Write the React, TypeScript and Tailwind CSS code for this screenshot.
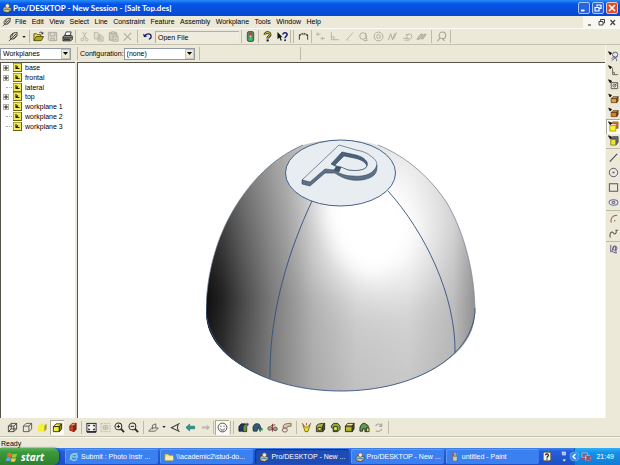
import React from 'react';
import { clsx } from 'clsx';

const cube = (fill: string, side: string, stroke = '#222200') => (
  <g stroke={stroke} strokeWidth="0.9" strokeLinejoin="round">
    <path d="M1.5 5 4.5 2H10.5L8 5Z" fill={fill} />
    <path d="M1.5 5H8V10.5H1.5Z" fill={fill} />
    <path d="M8 5 10.5 2V7.5L8 10.5Z" fill={side} />
  </g>
);

const smallCube = (fill: string, side: string) => (
  <g stroke="#5a3a10" strokeWidth="0.8" strokeLinejoin="round">
    <path d="M3.5 6 5.5 4H11L9.5 6Z" fill={fill} />
    <path d="M3.5 6H9.5V10.5H3.5Z" fill={fill} />
    <path d="M9.5 6 11 4V8.5L9.5 10.5Z" fill={side} />
    <path d="M0.8 1.2 4 2.6 2.2 4.4Z" fill="#111" stroke="#111" />
  </g>
);

const cursorMark = <path d="M0.5 0.8 4 2.2 2.4 4.2Z" fill="#111" stroke="#111" strokeWidth="0.8" />;

const icons: Record<string, React.ReactNode> = {
  feather: (
    <g fill="none" stroke="#3c3c3c" strokeWidth="1">
      <path d="M2.5 8C1.8 4.5 5 1.5 10 1.5C10.5 5 8 9 4 9Z" fill="#d8d6c4" />
      <path d="M1 11 9 3M4 6.2 5.5 2.6M6 8.6 9.8 4.8" />
    </g>
  ),
  open: (
    <g stroke="#4a4600" strokeWidth="0.9">
      <path d="M1 10.5V3H4L5 4H8.5V6" fill="#e8d84a" />
      <path d="M1 10.5 3.5 6H11.5L9 10.5Z" fill="#b9a71c" />
      <path d="M7 1.8C8.5 0.8 10 1.2 10.5 3M10.8 1.2V3H9" fill="none" stroke="#222" />
    </g>
  ),
  save: (
    <g fill="none" stroke="#aaa99c">
      <path d="M1.5 1.5H10.5V10.5H2.5L1.5 9.5Z" fill="#dcdacb" />
      <path d="M3.5 1.5V5.5H8.5V1.5M4 10.5V8H8V10.5" />
    </g>
  ),
  print: (
    <g stroke="#222" strokeWidth="0.9">
      <path d="M3 5 4.5 1H10L8.8 5Z" fill="#fff" />
      <path d="M1 6.5 2.5 4.8H10.5L11.3 6V9L9.5 10.8H1Z" fill="#8c8b84" />
      <path d="M1.2 7.5H9.5L11 6M2 9.2H8.6" fill="none" />
    </g>
  ),
  cut: (
    <g fill="none" stroke="#b5b3a5" strokeWidth="1">
      <path d="M4 1 7.5 8M8 1 4.5 8" />
      <circle cx="3.6" cy="9.4" r="1.5" />
      <circle cx="8.4" cy="9.4" r="1.5" />
    </g>
  ),
  copy: (
    <g fill="#e2e0d2" stroke="#b5b3a5" strokeWidth="1">
      <path d="M1.5 1.5H5L7 3.5V8.5H1.5ZM5.5 4.5H9L11 6.5V11H5.5Z" />
      <path d="M7 7H9.5M7 9H9.5" />
    </g>
  ),
  paste: (
    <g fill="#cfcdbf" stroke="#a9a799" strokeWidth="1">
      <path d="M1.5 2H9.5V10H1.5Z" />
      <path d="M3.5 1H7.5V3H3.5ZM5.5 5.5H11V11H5.5Z" fill="#e7e5d9" />
      <path d="M7 7.5H9.5M7 9.2H9.5" />
    </g>
  ),
  remove: <path d="M2 2.5 10 10M10 2 2 10.5" fill="none" stroke="#aeac9e" strokeWidth="1.2" />,
  undo: (
    <g fill="none" stroke="#16166e" strokeWidth="1.3">
      <path d="M3 5.5C4 2.5 9.5 2 10 5.5C10.2 7.5 9 8.5 7.5 9" />
      <path d="M1 3 2.2 6.8 6 5.6Z" fill="#16166e" stroke="none" />
    </g>
  ),
  traffic: (
    <g>
      <rect x="2.5" y="0.5" width="7" height="11" rx="2" fill="#4f8a63" stroke="#273b2e" strokeWidth="0.8" />
      <circle cx="6" cy="3" r="1.7" fill="#e5322d" />
      <circle cx="6" cy="6" r="1.2" fill="#d5d8c5" />
      <circle cx="6" cy="9" r="1.7" fill="#27d267" />
    </g>
  ),
  help: (
    <g fill="none">
      <path d="M3.2 4.3C3 0.8 9 0.8 8.9 4C8.8 6 6.2 5.8 6.2 8.2" stroke="#222" strokeWidth="2.8" />
      <path d="M3.2 4.3C3 0.8 9 0.8 8.9 4C8.8 6 6.2 5.8 6.2 7.8" stroke="#d5cf3a" strokeWidth="1.1" />
      <rect x="5" y="9.2" width="2.4" height="2.2" fill="#222" />
    </g>
  ),
  whats: (
    <g fill="none">
      <path d="M0.5 1V9L2.6 7.2 4 10.5 5.2 10 4 6.8H6Z" fill="#111" />
      <path d="M6.5 4C6.3 1.2 11 1.2 11 3.8C11 5.8 8.8 5.8 8.8 8" stroke="#1c1c78" strokeWidth="1.7" />
      <rect x="7.9" y="9.2" width="1.9" height="1.8" fill="#1c1c78" />
    </g>
  ),
  dimension: (
    <g fill="none" stroke="#333" strokeWidth="1">
      <path d="M1.5 9.5V5M10.5 9.5V5M2 4.5C3 3.3 4 3 5 3M7 3C8 3 9 3.3 10 4.5" />
      <path d="M0.8 5.5 3.4 5 1.8 3ZM11.2 5.5 8.6 5 10.2 3Z" fill="#333" stroke="none" />
      <path d="M5.2 2V4.4M6.8 2V4.4" strokeWidth="0.8" />
    </g>
  ),
  g1: <path d="M1 3.5H6M3 1.5V5M6 8H11M8 6.5V10" fill="none" stroke="#b2b0a2" />,
  g2: <path d="M2.5 1V9.5H11M2.5 6.5H5.5V9.5" fill="none" stroke="#b2b0a2" />,
  g3: <path d="M2 10.5 10 1.5M4 9 5.5 10.5" fill="none" stroke="#b9b7a9" />,
  g4: (
    <g fill="none" stroke="#aaa89a">
      <circle cx="5.5" cy="5.5" r="3.6" />
      <path d="M8 2 10 10.5H6" />
    </g>
  ),
  g5: (
    <g fill="none" stroke="#aaa89a">
      <circle cx="6" cy="6" r="4.8" />
      <circle cx="6" cy="6" r="2" />
    </g>
  ),
  g6: <path d="M1.5 10 4 3 6 9.5 8.5 2.5M7 9 10.5 1.5" fill="none" stroke="#aaa89a" />,
  g7: (
    <g fill="none" stroke="#b2b0a2">
      <path d="M1 8H7M4 4H7.5M3 10H8" />
      <circle cx="8" cy="6" r="2.8" />
    </g>
  ),
  g8: <path d="M1 9 5 3.5H7.5L3.8 9ZM5.5 8.5 9 3.5H11L7.8 8.5Z" fill="#c6c4b6" stroke="#a3a193" strokeWidth="0.9" />,
  lasso: (
    <g fill="none" stroke="#a3a193" strokeWidth="1.1">
      <circle cx="7" cy="4.8" r="3.6" />
      <path d="M4.5 7.5 1.5 11M7 8.4 9.5 10.8" />
    </g>
  ),
  shade1: (
    <path
      d="M1.5 4.5H7.5V10.5H1.5ZM1.5 4.5 4.5 1.5H10.5L7.5 4.5M10.5 1.5V7.5L7.5 10.5M4.5 1.5V7.5H10.5M4.5 7.5 1.5 10.5"
      fill="none"
      stroke="#333"
      strokeWidth="0.9"
    />
  ),
  shade2: <path d="M1.5 4.5H7.5V10.5H1.5ZM1.5 4.5 4.5 1.5H10.5L7.5 4.5M10.5 1.5V7.5L7.5 10.5" fill="none" stroke="#444" strokeWidth="0.9" />,
  shade3: (
    <g>
      <path d="M1 4 4 1.5H8V10.5H1Z" fill="#f6f13b" />
      <path d="M8 4 10.5 1.5V7.5L8 10.5Z" fill="#a8a11a" />
    </g>
  ),
  shade4: cube('#f3ee3c', '#8d8814'),
  shade5: (
    <g stroke="#6b2010" strokeWidth="0.8">
      <path d="M3 4.5 5.5 1.5H10L7.5 4.5Z" fill="#f0a070" />
      <path d="M3 4.5H7.5V10.5L3 9Z" fill="#d7411d" />
      <path d="M7.5 4.5 10 1.5V8L7.5 10.5Z" fill="#8e2412" />
    </g>
  ),
  zoomAll: (
    <g stroke="#1b1b30" fill="none">
      <rect x="1" y="1.5" width="10" height="9" fill="#f7f7ee" />
      <path d="M3 5V3.5H4.5M7.5 3.5H9V5M9 7V8.5H7.5M4.5 8.5H3V7M1 11H11" strokeWidth="1.2" />
    </g>
  ),
  zoomSel: (
    <g stroke="#b9b7a9" fill="none">
      <rect x="1" y="1.5" width="10" height="9" strokeDasharray="2 1" />
      <path d="M3.5 4H8.5V8H3.5ZM6 3V9M3 6H9" />
    </g>
  ),
  zoomIn: (
    <g fill="none" stroke="#2b2b2b" strokeWidth="1.1">
      <circle cx="4.8" cy="4.8" r="3.7" />
      <path d="M3 4.8H6.6M4.8 3V6.6" />
      <path d="M7.6 7.6 11 11" strokeWidth="2" />
    </g>
  ),
  zoomOut: (
    <g fill="none" stroke="#2b2b2b" strokeWidth="1.1">
      <circle cx="4.8" cy="4.8" r="3.7" />
      <path d="M3 4.8H6.6" />
      <path d="M7.6 7.6 11 11" strokeWidth="2" />
    </g>
  ),
  plane: (
    <g fill="none" stroke="#555" strokeWidth="0.9">
      <path d="M0.8 10 4 6.5H11.2L8 10Z" />
      <path d="M4.8 8V3.5L8.5 2V6.5" />
    </g>
  ),
  view: <path d="M10.5 1.5 1.5 6.2 10.5 10.5M8.8 2.6C7.8 5 8 7.5 9.2 9.6" fill="none" stroke="#333" strokeWidth="1.1" />,
  back: <path d="M1 6 5 2.3V4.6H10.5V7.4H5V9.7Z" fill="#1d9c93" stroke="#12645f" strokeWidth="0.6" />,
  forward: <path d="M11 6 7.5 3V5H2V7H7.5V9Z" fill="#bab8aa" />,
  smile: (
    <g fill="none" stroke="#333" strokeWidth="0.9">
      <circle cx="6" cy="6" r="4.8" />
      <path d="M3.5 7.2C4.5 9.4 7.5 9.4 8.5 7.2M4.3 4V5.2M7.7 4V5.2" />
    </g>
  ),
  extrude: (
    <g strokeWidth="0.8">
      <path d="M1 5 3.5 2H7.5L6 5V10H1Z" fill="#23376e" stroke="#111" />
      <path d="M5.5 5 7.5 2.5H11L9.5 5V10.5H5.5Z" fill="#6d8f36" stroke="#222" />
      <path d="M8 1.5H11V4" fill="none" stroke="#3450c8" />
    </g>
  ),
  project: (
    <g strokeWidth="0.8">
      <path d="M1 7C1 2 5 0.8 8 2.5L10.5 8 8.5 9.5 6.5 5.5 5.5 10H1.5Z" fill="#345c73" stroke="#182530" />
      <path d="M9 8V11M11 6.5V9.5" stroke="#28a04a" strokeWidth="1.2" />
    </g>
  ),
  revolve: (
    <g fill="none" stroke="#555" strokeWidth="1">
      <ellipse cx="3.2" cy="7" rx="2.3" ry="2" fill="#caa28c" />
      <ellipse cx="9" cy="7.5" rx="2.2" ry="2" fill="#a89a8e" />
      <path d="M6 2V10.5M4.5 4 9 3" stroke="#803030" />
    </g>
  ),
  sweep: (
    <g stroke="#73584a" strokeWidth="0.9">
      <path d="M2.5 6.5C1.5 2 6 1.5 11 1.5V4.5C8 4.5 6.2 4.8 6.4 7Z" fill="#dcc4b0" />
      <ellipse cx="4.2" cy="8.8" rx="2.8" ry="2.2" fill="#e8dbcd" />
    </g>
  ),
  draft: (
    <g strokeWidth="1" fill="none">
      <path d="M2 3 4.5 10.5H7.5L10 3 7.2 5.5H4.8Z" fill="#e8e033" stroke="#7c7010" />
      <path d="M1.2 1.2 3.2 4M10.8 1.2 8.8 4M6 1V3.5" stroke="#bd4a28" />
    </g>
  ),
  round: (
    <g stroke="#222" strokeWidth="0.9">
      <path d="M1.5 5C2 2.5 4 1.5 10.5 1.5L8.5 4.5V10.5H1.5Z" fill="#a5b03a" />
      <path d="M8.5 4.5 10.5 1.5V8L8.5 10.5Z" fill="#4f5b12" />
      <path d="M3.2 6H6.8V9H3.2Z" fill="#f4ef4c" />
    </g>
  ),
  chamfer: (
    <g stroke="#222" strokeWidth="0.9">
      <path d="M1.5 4 4 1.5H8.5L11 4.5V8L8.5 10.5H3.5V7L1.5 6Z" fill="#83ab3d" />
      <path d="M4 5H8V9.5H4Z" fill="#e9e541" />
    </g>
  ),
  shell: (
    <g stroke="#222" strokeWidth="0.9">
      <path d="M1.5 4.5 4 1.5H11L9 4.5Z" fill="#eeea9a" />
      <path d="M1.5 4.5H9V10.5H1.5Z" fill="#a9a51c" />
      <path d="M9 4.5 11 1.5V7.5L9 10.5Z" fill="#5b580c" />
      <path d="M3 7.5H7.5" stroke="#e9e541" />
    </g>
  ),
  pattern: (
    <g stroke="#222" strokeWidth="0.9">
      <path d="M1 6.5C1.5 3 4 1 6.5 1.5L10 4V8L8 10.5H6.5V7.5H4V10H1Z" fill="#5c9d47" />
      <path d="M8 6.5H11V10.5H8Z" fill="#e9e541" />
    </g>
  ),
  update: (
    <g fill="none" stroke="#a9a799" strokeWidth="1.2">
      <path d="M3 4.5C3.5 1.5 8.5 1.5 9.5 4.5M9.5 1.5V4.8H6.5" />
      <path d="M9.5 7.5C9 10.5 5 10.8 3 9.5" />
    </g>
  ),
  selSketch: (
    <g fill="none" stroke="#56567c" strokeWidth="1">
      {cursorMark}
      <circle cx="7.8" cy="4" r="2.8" />
      <path d="M4 8.5C6 5 9 6 9.5 11M4 10.5 10.5 5.5" />
    </g>
  ),
  selLine: (
    <g fill="none" stroke="#66665c" strokeWidth="1">
      {cursorMark}
      <path d="M5 3V10.5H11M5 8H7V10.5" />
    </g>
  ),
  selPlane: (
    <g fill="none" stroke="#55554c" strokeWidth="1">
      {cursorMark}
      <path d="M3.5 4H10.5V10.5H3.5Z" fill="#efede2" />
      <circle cx="7" cy="7.2" r="1.6" />
      <path d="M7 7.2 9.5 5" />
    </g>
  ),
  selEdge: smallCube('#e89a38', '#a8551a'),
  selFace: smallCube('#e07e25', '#8e4312'),
  selFeature: (
    <g>
      <path d="M3 3 5 1H11V8H9V3Z" fill="#dc8030" stroke="#704010" strokeWidth="0.7" />
      <path d="M2 5H8.5V11H2Z" fill="#fbf32c" stroke="#988d10" strokeWidth="0.8" />
      {cursorMark}
    </g>
  ),
  selPart: (
    <g>
      <path d="M3 4 5 1.8H11V8L8.5 11V4Z" fill="#6d6d8d" stroke="#333" strokeWidth="0.8" />
      <path d="M3 5H8.5V11H3Z" fill="#eee73a" stroke="#6d680c" strokeWidth="0.8" />
      {cursorMark}
    </g>
  ),
  line: <path d="M2 10.5 10 2" fill="none" stroke="#44444c" strokeWidth="1.1" />,
  circle: (
    <g fill="none" stroke="#50507c" strokeWidth="1">
      <circle cx="6" cy="6" r="4.6" />
      <path d="M5 6H7" strokeWidth="1.6" />
    </g>
  ),
  rect: <path d="M1.5 2H10.5V10H1.5Z" fill="none" stroke="#55556c" strokeWidth="1.1" />,
  ellipse: (
    <g fill="none" stroke="#6a6a9c" strokeWidth="1.1">
      <ellipse cx="6" cy="6" rx="4.8" ry="3" />
      <ellipse cx="6" cy="6" rx="1.6" ry="1" />
    </g>
  ),
  arc: (
    <g fill="none" stroke="#a0653e" strokeWidth="1.1">
      <path d="M3.5 10.5C2.5 5.5 5 2.5 10 2.5" />
      <path d="M6.5 8.5H8" stroke="#555" />
    </g>
  ),
  spline: <path d="M2.5 10.5C1 6 4 3 5.5 5C7 7.5 9.5 6.5 9 3.2M8 2.5H11" fill="none" stroke="#4c5a4c" strokeWidth="1.1" />,
  erase: (
    <g fill="none" stroke="#56567c" strokeWidth="1">
      <path d="M3 1V9M7 2 4 8 9 10 8 3Z" />
      <circle cx="7.5" cy="4.5" r="2.3" />
    </g>
  ),
};

interface ToolProps {
  name: string;
  active?: boolean;
}

const Tool = ({ name, active }: ToolProps) => (
  <button
    type="button"
    aria-label={name}
    className={clsx(
      'flex h-[15px] w-[14px] shrink-0 items-center justify-center',
      active && 'bg-[#fbfaf4] shadow-[inset_1px_1px_0_#aca899]',
    )}
  >
    <svg viewBox="0 0 12 12" className="size-[11px]" aria-hidden="true">{icons[name]}</svg>
  </button>
);

const Tools = ({ names, className, active }: { names: string[]; className?: string; active?: string }) => (
  <div className={clsx('flex shrink-0 justify-between', className)}>
    {names.map((n) => <Tool key={n} name={n} active={n === active} />)}
  </div>
);

const Sep = ({ className = 'mx-[2px]' }: { className?: string }) => (
  <span className={clsx('h-[13px] w-px shrink-0 bg-[#bdbaa9]', className)} />
);

const Caret = () => (
  <button type="button" aria-label="More" className="flex h-[15px] w-[8px] shrink-0 items-center justify-center">
    <svg viewBox="0 0 5 3" className="h-[2px] w-[4px]" aria-hidden="true"><path d="M0 0H5L2.5 3Z" fill="#222" /></svg>
  </button>
);

const Combo = ({ id, label, value, className }: { id: string; label: string; value: string; className: string }) => (
  <div className={clsx('relative h-[12px]', className)}>
    <select
      id={id}
      aria-label={label}
      className="block h-full w-full appearance-none border border-[#8f9aa6] bg-white pl-[2px] text-[7px] leading-[9px] text-black"
    >
      <option>{value}</option>
    </select>
    <span className="pointer-events-none absolute inset-y-px right-px flex w-[9px] items-center justify-center border border-[#c9c6b7] bg-[#ece9d8]">
      <svg viewBox="0 0 5 3" className="h-[3px] w-[5px]" aria-hidden="true"><path d="M0 0H5L2.5 3Z" fill="#000" /></svg>
    </span>
  </div>
);

const AppLogo = ({ className = 'size-[10px]' }: { className?: string }) => (
  <svg viewBox="0 0 12 12" className={clsx('shrink-0', className)} aria-hidden="true">
    <path d="M1 8C1 5 4 4 6 4.5L11 6V9L7 11.5 2 10.5Z" fill="#d9c98a" stroke="#3a3524" strokeWidth="0.8" />
    <circle cx="6.5" cy="3.6" r="2.6" fill="#efe9cf" stroke="#58523c" strokeWidth="0.8" />
    <path d="M2 8.5C4 7 7 7.5 10 8.5" fill="none" stroke="#4d7cc0" strokeWidth="1.3" />
  </svg>
);

const menus = ['File', 'Edit', 'View', 'Select', 'Line', 'Constraint', 'Feature', 'Assembly', 'Workplane', 'Tools', 'Window', 'Help'];

const planes = [
  { name: 'base', open: true },
  { name: 'frontal', open: true },
  { name: 'lateral', open: false },
  { name: 'top', open: true },
  { name: 'workplane 1', open: true },
  { name: 'workplane 2', open: false },
  { name: 'workplane 3', open: false },
];

const TitleBar = () => (
  <header className="flex h-[16px] shrink-0 items-center bg-linear-to-b from-[#2b8cf8] via-[#0554e6] via-25% to-[#0648d2] pr-[2px] pl-[2px]">
    <AppLogo />
    <h1 className="ml-px flex-1 truncate font-['Lato',sans-serif] text-[8px] leading-[14px] font-bold text-white">
      Pro/DESKTOP - New Session - [Salt Top.des]
    </h1>
    <div className="flex gap-[2px]">
      <button type="button" aria-label="Minimize" className="size-[12px] rounded-[2px] border border-[#a9c6f8] bg-[#2a63dd]">
        <svg viewBox="0 0 10 10" aria-hidden="true"><path d="M2 7.5H5.5" stroke="#fff" strokeWidth="1.8" /></svg>
      </button>
      <button type="button" aria-label="Restore" className="size-[12px] rounded-[2px] border border-[#a9c6f8] bg-[#2a63dd]">
        <svg viewBox="0 0 10 10" aria-hidden="true">
          <path d="M4 3.5V2H8V5.5H6.5M2 4.5H6V8H2Z" fill="none" stroke="#fff" strokeWidth="1.2" />
        </svg>
      </button>
      <button type="button" aria-label="Close" className="size-[12px] rounded-[2px] border border-[#f3c3b4] bg-[#dd4f28]">
        <svg viewBox="0 0 10 10" aria-hidden="true"><path d="M2 2 8 8M8 2 2 8" stroke="#fff" strokeWidth="1.6" /></svg>
      </button>
    </div>
  </header>
);

const MenuBar = () => (
  <nav className="flex h-[12px] shrink-0 items-center justify-between pl-[2px]">
    <div className="flex items-center">
      <svg viewBox="0 0 12 12" className="mr-[3px] size-[10px]" aria-hidden="true">{icons.feather}</svg>
      <div className="flex w-[306px] justify-between">
        {menus.map((m) => <button key={m} type="button" className="leading-[10px]">{m}</button>)}
      </div>
    </div>
    <div className="flex h-full items-center bg-[#f8f7f1] px-[2px]">
      <button type="button" aria-label="Minimize document" className="size-[11px]">
        <svg viewBox="0 0 11 11" aria-hidden="true"><path d="M3 8H6" stroke="#444" strokeWidth="1.2" /></svg>
      </button>
      <button type="button" aria-label="Restore document" className="size-[11px]">
        <svg viewBox="0 0 11 11" aria-hidden="true"><path d="M4.5 4V2.5H8.5V6H7M3 4.5H7V8H3Z" fill="none" stroke="#444" /></svg>
      </button>
      <button type="button" aria-label="Close document" className="size-[11px]">
        <svg viewBox="0 0 11 11" aria-hidden="true"><path d="M3.5 3 8 8M8 3 3.5 8" stroke="#444" strokeWidth="1.2" /></svg>
      </button>
    </div>
  </nav>
);

const MainToolbar = () => (
  <div className="flex h-[17px] shrink-0 items-center border-t border-b border-t-[#fbfaf4] border-b-[#c5c2b2] pl-[6px]">
    <Tool name="feather" />
    <Caret />
    <Sep className="mx-px" />
    <Tools names={['open', 'save', 'print']} className="w-[43px]" />
    <Sep className="mx-px" />
    <Tools names={['cut', 'copy', 'paste', 'remove']} className="w-[58px]" />
    <Sep />
    <Tool name="undo" />
    <input
      aria-label="Command"
      defaultValue="Open File"
      className="mx-px h-[12px] w-[84px] border-t border-l border-[#b3b0a0] bg-[#efecdf] pl-[2px] leading-[10px]"
    />
    <Sep className="mx-px" />
    <Tool name="traffic" />
    <Sep className="mx-px" />
    <Tools names={['help', 'whats']} className="w-[29px]" />
    <Sep className="ml-px" />
    <Sep />
    <Tool name="dimension" />
    <Sep className="mx-px" />
    <Tools names={['g1', 'g2', 'g3', 'g4', 'g5', 'g6', 'g7', 'g8']} className="w-[116px]" />
    <Sep />
    <Tool name="lasso" />
    <Sep />
  </div>
);

const WorkplaneTree = () => (
  <ul className="grid h-[68px] grid-rows-7">
    {planes.map((p) => (
      <li key={p.name} className="flex items-center">
        {p.open ? (
          <button type="button" aria-label={`Expand ${p.name}`} className="mr-[4px] ml-[2px] size-[6px] border border-[#b5b2a5]">
            <svg viewBox="0 0 4 4" aria-hidden="true"><path d="M0 2H4M2 0V4" stroke="#222" strokeWidth="1" /></svg>
          </button>
        ) : (
          <span className="mr-px ml-[5px] w-[6px] border-t border-dotted border-[#aaa]" />
        )}
        <svg viewBox="0 0 9 9" className="mr-[3px] size-[9px]" aria-hidden="true">
          <rect width="9" height="9" fill="#6c6616" />
          <rect x="0.5" y="0.5" width="7.5" height="7.5" fill="#f2e958" />
          <path d="M3 2V5.5H6.5M3 5.5 5 3.5" fill="none" stroke="#2b2900" strokeWidth="1.1" />
        </svg>
        <span className="leading-[9px] whitespace-nowrap">{p.name}</span>
      </li>
    ))}
  </ul>
);

const Dome = () => {
  const left = 'M206 314C206 274 217 237 234 209C251 181 273 158 303 145';
  const right = 'M378 145C408 157 432 180 447 203C465 234 475 274 475 314';
  const body = `${left}C325 138 356 138 378 145C408 157 432 180 447 203C465 234 475 274 475 314C475 356 415 391 341 391C266 391 206 356 206 314Z`;
  return (
    <svg viewBox="206 139 272 254" className="h-[254px] w-[272px] shrink-0" role="img" aria-label="Salt Top">
      <defs>
        <linearGradient id="body" gradientUnits="userSpaceOnUse" x1="206" y1="0" x2="475" y2="0">
          <stop offset="0" stopColor="#0c0c0c" />
          <stop offset="0.06" stopColor="#202020" />
          <stop offset="0.14" stopColor="#4a4a4a" />
          <stop offset="0.25" stopColor="#7c7c7c" />
          <stop offset="0.4" stopColor="#b2b2b2" />
          <stop offset="0.56" stopColor="#cfcfcf" />
          <stop offset="0.75" stopColor="#d6d6d6" />
          <stop offset="0.92" stopColor="#bdbdbd" />
          <stop offset="1" stopColor="#929292" />
        </linearGradient>
        <linearGradient id="lift" gradientUnits="userSpaceOnUse" x1="0" y1="145" x2="0" y2="300">
          <stop offset="0" stopColor="#fff" stopOpacity="0.3" />
          <stop offset="1" stopColor="#fff" stopOpacity="0" />
        </linearGradient>
        <linearGradient id="low" gradientUnits="userSpaceOnUse" x1="0" y1="290" x2="0" y2="392">
          <stop offset="0" stopColor="#888" stopOpacity="0" />
          <stop offset="1" stopColor="#888" stopOpacity="0.2" />
        </linearGradient>
        <filter id="glow" x="-60%" y="-60%" width="220%" height="220%">
          <feGaussianBlur stdDeviation="9" />
        </filter>
        <filter id="haze" x="-60%" y="-60%" width="220%" height="220%">
          <feGaussianBlur stdDeviation="20" />
        </filter>
        <clipPath id="bodyClip"><path d={body} /></clipPath>
      </defs>
      <g clipPath="url(#bodyClip)">
        <path d={body} fill="url(#body)" />
        <path d={body} fill="url(#lift)" />
        <path d={body} fill="url(#low)" />
        <path d="M312 170 412 155 446 215 430 278 375 302 324 272Z" fill="#fff" fillOpacity="0.75" filter="url(#haze)" />
        <path d="M322 190 396 185 418 228 404 262 370 278 342 258 326 226Z" fill="#fff" filter="url(#glow)" />
      </g>
      <g fill="none" stroke="#31517e" strokeWidth="0.9">
        <path d="M206 308C206 356 266 391 341 391C415 391 475 356 475 308" />
        <path d="M312 201C290 248 269 310 270 378" />
        <path d="M388 191C425 232 456 296 455 353" />
        <path d={left} stroke="#4b5a70" strokeWidth="0.7" />
        <path d={right} stroke="#6b7686" strokeWidth="0.7" />
        <ellipse cx="340.5" cy="173" rx="55" ry="33" fill="#e7edf1" />
      </g>
      {/* raised mark on the flat top: walls first, top face over them */}
      <g stroke="#2f4562" strokeWidth="0.6" strokeLinejoin="round">
        <path
          d="M302 180V184L310 186 325 173 335 173C339 176 345 179 352 180C361 181 370 179 374 175C377 172 377 169 377 165L370 160 325 165Z"
          fill="#5d7186"
        />
        <path d="M342 152 356 155C364 157 369 162 367 166C365 171 355 171 348 170L331 164Z" fill="#e7edf1" />
        <path d="M342 152 356 155C364 157 369 162 367 166C365 161 359 159 354 158L344 156 334 166 331 164Z" fill="#4d6178" />
        <path
          d="M339 145 302 180 310 182 325 169 334 170C340 174 346 176 353 176C362 177 370 175 374 170C378 166 378 161 372 157C368 153 362 151 356 150ZM342 152 356 155C364 157 369 162 367 166C365 171 355 171 348 170L341 167 339 168 331 164Z"
          fill="#e7edf1"
          fillRule="evenodd"
        />
        <path d="M334 170 336 167 341 167 339 172Z" fill="#40566f" />
      </g>
    </svg>
  );
};

const ViewToolbar = () => (
  <div className="flex h-[19px] shrink-0 items-center border-b border-[#c5c2b2] pl-[5px]">
    <Tools names={['shade1', 'shade2', 'shade3', 'shade4', 'shade5']} active="shade4" className="w-[74px]" />
    <Sep />
    <Tools names={['zoomAll', 'zoomSel', 'zoomIn', 'zoomOut']} className="w-[57px]" />
    <Sep />
    <Tool name="plane" />
    <Caret />
    <Tools names={['view', 'back', 'forward']} className="w-[44px]" />
    <Sep className="mx-px" />
    <Tool name="smile" active />
    <Sep className="ml-px" />
    <Sep />
    <Tools names={['extrude', 'project', 'revolve', 'sweep']} className="w-[58px]" />
    <Sep />
    <Tools names={['draft', 'round', 'chamfer', 'shell', 'pattern', 'update']} className="w-[87px]" />
    <Sep />
  </div>
);

const SideToolbar = () => (
  <aside className="flex w-[15px] shrink-0 flex-col items-center overflow-hidden border-l border-[#f8f7f1] pt-[4px]">
    {['selSketch', 'selLine', 'selPlane', 'selEdge', 'selFace', 'selFeature', 'selPart'].map((n) => (
      <div key={n} className="flex h-[14px] items-center">
        <Tool name={n} active={n === 'selFeature'} />
      </div>
    ))}
    <span className="my-px h-px w-full bg-[#bdbaa9]" />
    {['line', 'circle', 'rect', 'ellipse'].map((n) => <Tool key={n} name={n} />)}
    <span className="h-px w-full bg-[#bdbaa9]" />
    <Tool name="arc" />
    <Tool name="spline" />
    <span className="h-px w-full bg-[#bdbaa9]" />
    <Tool name="erase" />
  </aside>
);

const tasks = [
  {
    label: 'Submit : Photo Instr ...',
    icon: (
      <svg viewBox="0 0 12 12" className="size-[10px] shrink-0" aria-hidden="true">
        <path d="M9.5 8A4 4 0 1 1 10 6H4" fill="none" stroke="#7fd0fb" strokeWidth="1.8" />
        <path d="M1 10C3 4 8 1 11 1.5" fill="none" stroke="#f2d660" strokeWidth="0.9" />
      </svg>
    ),
  },
  {
    label: '\\\\academic2\\stud-do...',
    icon: (
      <svg viewBox="0 0 12 12" className="size-[10px] shrink-0" aria-hidden="true">
        <path d="M1 2.5H5L6 4H11V10H1Z" fill="#f6df77" stroke="#b08c22" strokeWidth="0.7" />
        <path d="M2 5.5H11V10H2Z" fill="#fbf0a8" />
      </svg>
    ),
  },
  { label: 'Pro/DESKTOP - New ...', icon: <AppLogo />, active: true },
  { label: 'Pro/DESKTOP - New ...', icon: <AppLogo /> },
  {
    label: 'untitled - Paint',
    icon: (
      <svg viewBox="0 0 12 12" className="size-[10px] shrink-0" aria-hidden="true">
        <path d="M3 5H9L8.5 11H3.5Z" fill="#c5c9cc" stroke="#555" strokeWidth="0.7" />
        <path d="M4 5 2.5 1" stroke="#d9402c" strokeWidth="1.4" />
        <path d="M6 5V0.8" stroke="#f0c52d" strokeWidth="1.4" />
        <path d="M8 5 9.8 1" stroke="#58a844" strokeWidth="1.4" />
      </svg>
    ),
  },
];

const Taskbar = () => (
  <footer className="flex h-[17px] shrink-0 bg-linear-to-b from-[#3d84ef] via-[#245edb] via-20% to-[#1f4fc4] text-white">
    <button
      type="button"
      className="mr-[6px] flex w-[59px] shrink-0 items-center rounded-r-[6px] bg-linear-to-b from-[#5cb15a] via-[#3a9a3a] via-25% to-[#2f7f31] pl-[6px] shadow-[1px_0_2px_#143a80]"
    >
      <svg viewBox="0 0 12 12" className="mr-[3px] size-[12px]" aria-hidden="true">
        <path d="M1.5 2.5C3 1.5 4.5 1.8 5.8 2.5L5 6C3.6 5.2 2.4 5.2 0.8 6Z" fill="#ef6a31" />
        <path d="M6.5 2.8C8 3.5 9.6 3.2 11 2.5L10.2 6C8.8 6.8 7.2 6.8 5.8 6.2Z" fill="#8ccf48" />
        <path d="M0.6 6.8C2.2 6 3.5 6 4.8 6.8L4 10.2C2.6 9.5 1.4 9.5 0 10.2Z" fill="#63a4f5" />
        <path d="M5.6 7C7 7.7 8.6 7.6 10 6.9L9.2 10.3C7.8 11 6.3 11 4.8 10.4Z" fill="#f6cf3d" />
      </svg>
      <span className="font-['Open_Sans',sans-serif] text-[10px] leading-[14px] font-bold italic">start</span>
    </button>
    <div className="flex min-w-0 flex-1 items-stretch gap-[2px] py-px">
      {tasks.map((t, i) => (
        <button
          key={i}
          type="button"
          className={clsx(
            'flex min-w-0 flex-1 items-center gap-[2px] rounded-[2px] pl-[4px] whitespace-nowrap',
            t.active ? 'bg-[#1e4bb4] shadow-[inset_1px_1px_1px_#12337f]' : 'bg-[#3a80f1] shadow-[inset_1px_1px_0_#5c9af6]',
          )}
        >
          {t.icon}
          <span className="leading-[10px]">{t.label}</span>
        </button>
      ))}
    </div>
    <div className="flex w-[35px] shrink-0 items-center justify-between pr-[7px] pl-[4px]">
      <svg viewBox="0 0 8 9" className="h-[9px] w-[8px]" aria-hidden="true">
        <rect width="8" height="9" fill="#f4f2e6" stroke="#222" />
        <path d="M2.6 3.2C2.6 1.4 5.6 1.5 5.4 3.4C5.2 4.6 4 4.4 4 5.8M4 6.6V7.8" fill="none" stroke="#111" strokeWidth="1.1" />
      </svg>
      <svg viewBox="0 0 6 12" className="h-[12px] w-[6px]" aria-hidden="true">
        <path d="M1 1H4.5V4H1.5Z" fill="#9dbdf7" stroke="#dbe7ff" strokeWidth="0.7" />
        <path d="M1.5 8.5H5L3.2 10.5Z" fill="#fff" />
      </svg>
    </div>
    <div className="flex w-[46px] shrink-0 items-center border-l border-[#0d5fc0] bg-linear-to-b from-[#2fb0f8] via-[#1494ea] via-25% to-[#0f7bd5]">
      <button type="button" aria-label="Show hidden icons" className="-ml-[5px] size-[9px] rounded-full bg-[#2f8ff0] shadow-[0_0_1px_#fff]">
        <svg viewBox="0 0 9 9" aria-hidden="true"><path d="M5.5 2 3 4.5 5.5 7" fill="none" stroke="#fff" strokeWidth="1.4" /></svg>
      </button>
      <svg viewBox="0 0 12 12" className="ml-[2px] size-[11px]" aria-hidden="true">
        <path d="M1 2H7V7H1ZM5 5H10V10H5Z" fill="#5b6ea0" stroke="#c7d3ee" strokeWidth="0.7" />
        <path d="M6 5 10.5 10.5M10.5 5 6 10.5M0.5 8H4" stroke="#d9303a" strokeWidth="1.4" />
      </svg>
      <time className="ml-auto pr-[6px] leading-[10px]">21:49</time>
    </div>
  </footer>
);

export default function App() {
  return (
    <div className="flex h-screen flex-col overflow-hidden bg-[#ece9d8] font-['Liberation_Sans',Arial,sans-serif] text-[7px] text-black">
      <TitleBar />
      <MenuBar />
      <MainToolbar />
      <main className="flex min-h-0 flex-1">
        <section className="mr-[2px] flex w-[75px] shrink-0 flex-col">
          <div className="flex h-[17px] shrink-0 items-center">
            <Combo id="browser" label="Browser" value="Workplanes" className="w-[71px]" />
          </div>
          <div className="min-h-0 flex-1 border-t border-l border-[#55534a] bg-white">
            <WorkplaneTree />
          </div>
        </section>
        <section className="flex min-w-0 flex-1 flex-col">
          <div className="flex h-[17px] shrink-0 items-center">
            <Sep className="mr-[2px]" />
            <label htmlFor="configuration" className="leading-[10px]">Configuration:</label>
            <Combo id="configuration" label="Configuration" value="(none)" className="w-[71px]" />
            <Sep className="ml-[4px]" />
            <Sep className="ml-[100px]" />
          </div>
          <div className="flex min-h-0 flex-1 items-start justify-center overflow-hidden border-t border-l border-[#55534a] bg-white pt-[76px]">
            <Dome />
          </div>
        </section>
        <SideToolbar />
      </main>
      <ViewToolbar />
      <div role="status" className="flex h-[11px] shrink-0 items-center border-t border-[#f8f7f1] pl-px leading-[9px]">Ready</div>
      <Taskbar />
    </div>
  );
}
